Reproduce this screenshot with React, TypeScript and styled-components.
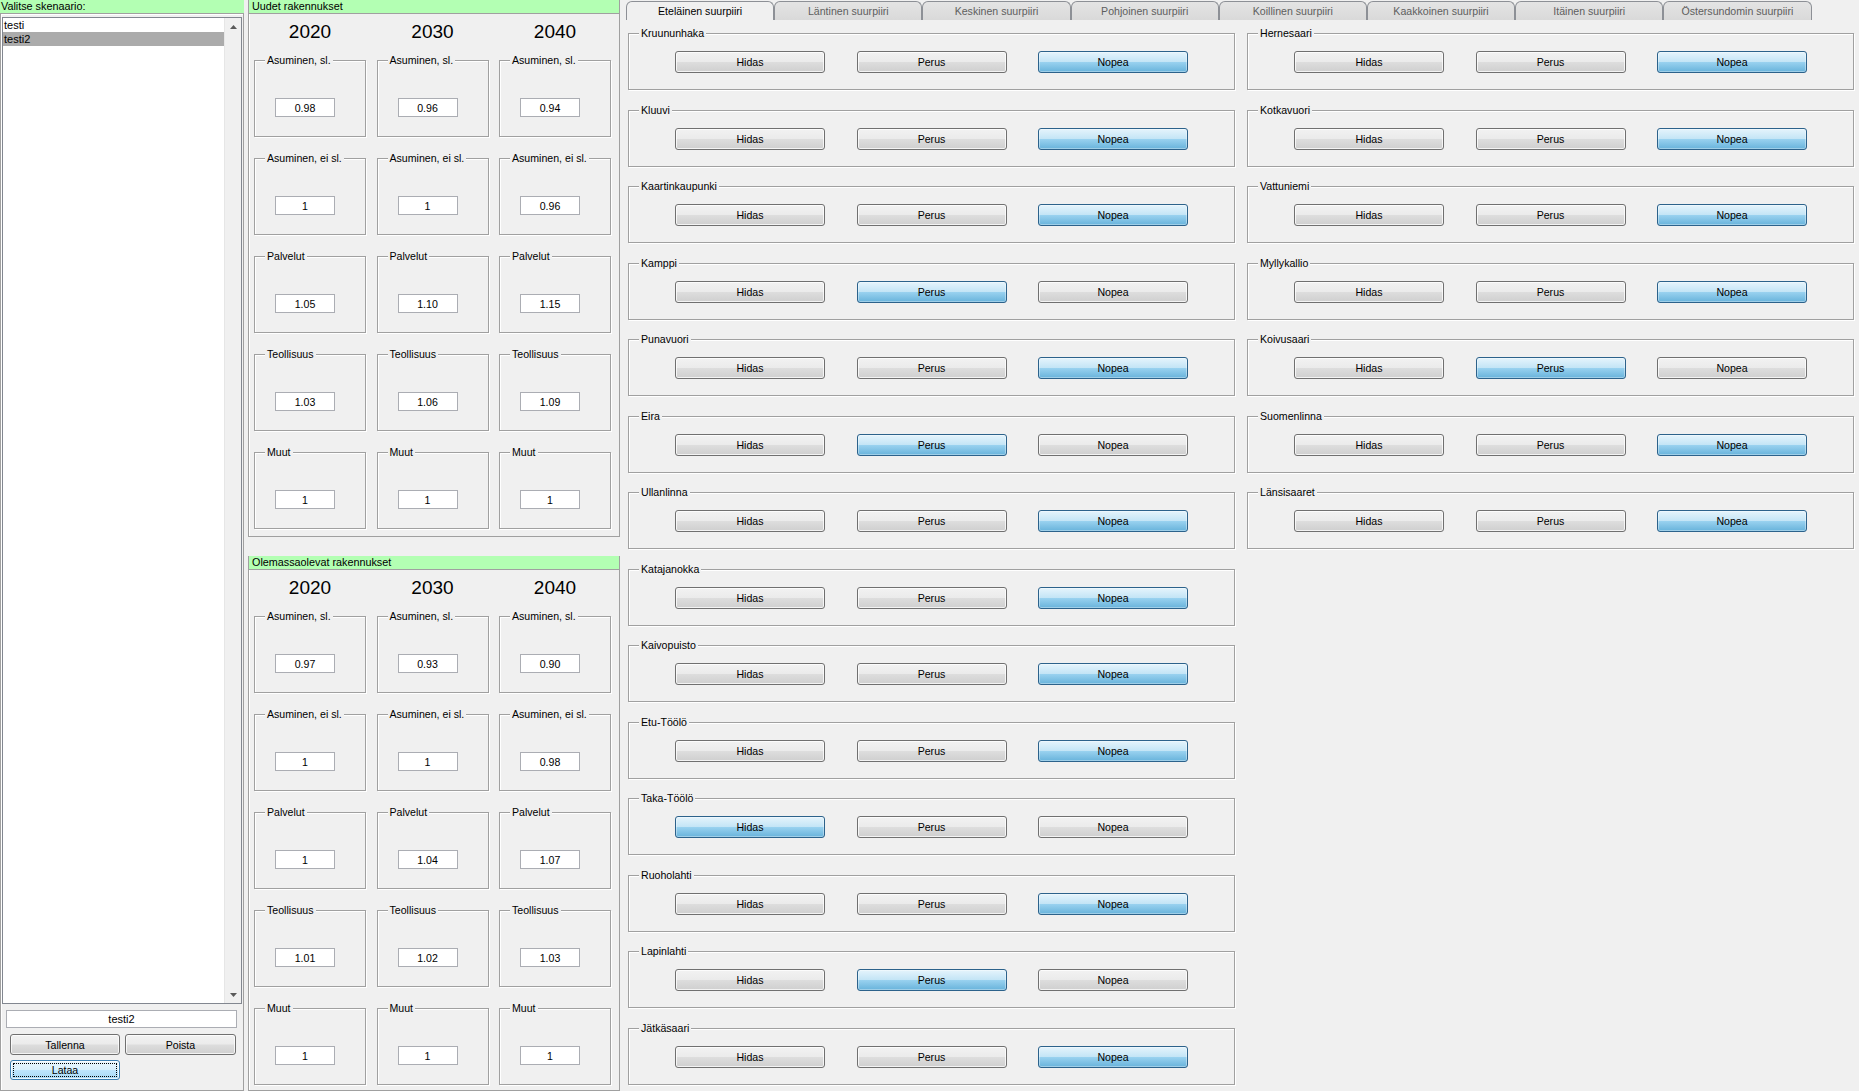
import React from "react";
import styled, { createGlobalStyle, css } from "styled-components";

type Speed = "Hidas" | "Perus" | "Nopea";

const SPEEDS: Speed[] = ["Hidas", "Perus", "Nopea"];

const TABS = [
  "Eteläinen suurpiiri",
  "Läntinen suurpiiri",
  "Keskinen suurpiiri",
  "Pohjoinen suurpiiri",
  "Koillinen suurpiiri",
  "Kaakkoinen suurpiiri",
  "Itäinen suurpiiri",
  "Östersundomin suurpiiri",
];

const LEFT_DISTRICTS: [string, Speed][] = [
  ["Kruununhaka", "Nopea"],
  ["Kluuvi", "Nopea"],
  ["Kaartinkaupunki", "Nopea"],
  ["Kamppi", "Perus"],
  ["Punavuori", "Nopea"],
  ["Eira", "Perus"],
  ["Ullanlinna", "Nopea"],
  ["Katajanokka", "Nopea"],
  ["Kaivopuisto", "Nopea"],
  ["Etu-Töölö", "Nopea"],
  ["Taka-Töölö", "Hidas"],
  ["Ruoholahti", "Nopea"],
  ["Lapinlahti", "Perus"],
  ["Jätkäsaari", "Nopea"],
];

const RIGHT_DISTRICTS: [string, Speed][] = [
  ["Hernesaari", "Nopea"],
  ["Kotkavuori", "Nopea"],
  ["Vattuniemi", "Nopea"],
  ["Myllykallio", "Nopea"],
  ["Koivusaari", "Perus"],
  ["Suomenlinna", "Nopea"],
  ["Länsisaaret", "Nopea"],
];

const YEARS = ["2020", "2030", "2040"];

interface Factor {
  label: string;
  values: string[];
}

const NEW_BUILDINGS: Factor[] = [
  { label: "Asuminen, sl.", values: ["0.98", "0.96", "0.94"] },
  { label: "Asuminen, ei sl.", values: ["1", "1", "0.96"] },
  { label: "Palvelut", values: ["1.05", "1.10", "1.15"] },
  { label: "Teollisuus", values: ["1.03", "1.06", "1.09"] },
  { label: "Muut", values: ["1", "1", "1"] },
];

const OLD_BUILDINGS: Factor[] = [
  { label: "Asuminen, sl.", values: ["0.97", "0.93", "0.90"] },
  { label: "Asuminen, ei sl.", values: ["1", "1", "0.98"] },
  { label: "Palvelut", values: ["1", "1.04", "1.07"] },
  { label: "Teollisuus", values: ["1.01", "1.02", "1.03"] },
  { label: "Muut", values: ["1", "1", "1"] },
];

const ScrollArrow = ({ down }: { down?: boolean }) => (
  <svg width="7" height="4" viewBox="0 0 7 4">
    <path d={down ? "M0 0 L7 0 L3.5 4 Z" : "M0 4 L7 4 L3.5 0 Z"} fill="#5a5a5a" />
  </svg>
);

const ScenarioPanel = () => (
  <LeftPanel>
    <PanelTitle>Valitse skenaario:</PanelTitle>
    <LeftBody>
      <ListBox>
        <ListItems>
          <ListItem>testi</ListItem>
          <ListItem $selected>testi2</ListItem>
        </ListItems>
        <ScrollTrack>
          <ScrollArrow />
          <ScrollArrow down />
        </ScrollTrack>
      </ListBox>
      <NameField readOnly value="testi2" />
      <ButtonRow>
        <WinButton $w={110} $h={21}>Tallenna</WinButton>
        <WinButton $w={111} $h={21}>Poista</WinButton>
      </ButtonRow>
      <ButtonRow>
        <WinButton $w={110} $h={20} $focused>
          Lataa
        </WinButton>
      </ButtonRow>
    </LeftBody>
  </LeftPanel>
);

const BuildingPanel = ({ title, factors, top }: { title: string; factors: Factor[]; top?: boolean }) => (
  <Panel $top={top}>
    <PanelTitle $pad={3}>{title}</PanelTitle>
    <YearRow>
      {YEARS.map((y) => (
        <Year key={y}>{y}</Year>
      ))}
    </YearRow>
    <BoxGrid>
      {factors.map((f) =>
        f.values.map((v, i) => (
          <FactorBox key={f.label + i}>
            <Legend>{f.label}</Legend>
            <ValueInput readOnly value={v} />
          </FactorBox>
        ))
      )}
    </BoxGrid>
  </Panel>
);

const DistrictList = ({ items }: { items: [string, Speed][] }) => (
  <DistrictColumn>
    {items.map(([name, speed]) => (
      <DistrictFrame key={name}>
        <Legend>{name}</Legend>
        {SPEEDS.map((s) => (
          <WinButton key={s} $w={150} $h={22} $active={s === speed}>
            {s}
          </WinButton>
        ))}
      </DistrictFrame>
    ))}
  </DistrictColumn>
);

const App = () => {
  return (
    <>
      <GlobalStyle />
      <Window>
        <ScenarioPanel />
        <Splitter />
        <MiddleColumn>
          <BuildingPanel title="Uudet rakennukset" factors={NEW_BUILDINGS} top />
          <BuildingPanel title="Olemassaolevat rakennukset" factors={OLD_BUILDINGS} />
        </MiddleColumn>
        <RightPane>
          <TabBar>
            {TABS.map((t, i) => (
              <Tab key={t} $selected={i === 0}>
                {t}
              </Tab>
            ))}
          </TabBar>
          <TabContent>
            <DistrictList items={LEFT_DISTRICTS} />
            <DistrictList items={RIGHT_DISTRICTS} />
          </TabContent>
        </RightPane>
      </Window>
    </>
  );
};

export default App;

const GlobalStyle = createGlobalStyle`
  html, body {
    margin: 0;
    padding: 0;
    background: #f0f0f0;
  }
  body {
    font-family: "Liberation Sans", Arial, sans-serif;
    font-size: 10.6px;
    color: #000;
  }
  #root {
    width: 1859px;
    height: 1091px;
    overflow: hidden;
  }
  * {
    box-sizing: border-box;
  }
`;

const etched = css`
  border: 1px solid #a0a0a0;
  box-shadow: inset 1px 1px 0 #fff, 1px 1px 0 #fff;
`;

const Window = styled.div`
  display: flex;
  width: 1859px;
  height: 1091px;
  background: #f0f0f0;
`;

const LeftPanel = styled.div`
  width: 244px;
  flex-shrink: 0;
  display: flex;
  flex-direction: column;
`;

const PanelTitle = styled.div<{ $pad?: number }>`
  height: 13px;
  line-height: 13px;
  padding-left: ${({ $pad }) => $pad ?? 1}px;
  background: #b3ffb3;
  font-size: 10.8px;
  white-space: nowrap;
`;

const LeftBody = styled.div`
  flex: 1;
  display: flex;
  flex-direction: column;
  border: 1px solid #a0a0a0;
  box-shadow: inset 1px 1px 0 #fff;
  padding: 3px 1px 10px 1px;
`;

const ListBox = styled.div`
  flex: 1;
  display: flex;
  background: #fff;
  border: 1px solid #828790;
`;

const ListItems = styled.div`
  flex: 1;
`;

const ListItem = styled.div<{ $selected?: boolean }>`
  height: 14px;
  line-height: 14px;
  padding-left: 1px;
  font-size: 11px;
  background: ${({ $selected }) => ($selected ? "#ababab" : "transparent")};
`;

const ScrollTrack = styled.div`
  width: 17px;
  display: flex;
  flex-direction: column;
  justify-content: space-between;
  align-items: center;
  padding: 7px 0 6px;
  background: #f0f0f0;
  border-left: 1px solid #e6e6e6;
`;

const NameField = styled.input`
  margin: 6px 5px 0 4px;
  height: 18px;
  padding: 0;
  border: 1px solid #abadb3;
  background: #fff;
  text-align: center;
  font-family: inherit;
  font-size: 11px;
  color: #000;
  outline: none;
`;

const ButtonRow = styled.div`
  display: flex;
  gap: 5px;
  padding-left: 8px;
  margin-top: 6px;

  & + & {
    margin-top: 5px;
  }
`;

const WinButton = styled.div<{ $w: number; $h: number; $active?: boolean; $focused?: boolean }>`
  position: relative;
  width: ${({ $w }) => $w}px;
  height: ${({ $h }) => $h}px;
  flex-shrink: 0;
  display: flex;
  align-items: center;
  justify-content: center;
  border-radius: 3px;
  font-size: 10.6px;
  color: #000;
  border: 1px solid #707070;
  background: linear-gradient(#f2f2f2 0%, #ebebeb 48%, #dddddd 52%, #cfcfcf 100%);
  box-shadow: inset 0 0 0 1px rgba(255, 255, 255, 0.75);

  ${({ $active }) =>
    $active &&
    css`
      border-color: #2c628b;
      background: linear-gradient(#e5f4fc 0%, #c4e5f6 48%, #98d1ef 52%, #68b3db 100%);
      box-shadow: inset 0 0 0 1px rgba(255, 255, 255, 0.35);
    `}

  ${({ $focused }) =>
    $focused &&
    css`
      border-color: #3c7fb1;
      background: linear-gradient(#eaf6fd 0%, #d9f0fc 48%, #bee6fd 52%, #a7d9f5 100%);
      &::after {
        content: "";
        position: absolute;
        inset: 2px;
        border: 1px dotted #000;
      }
    `}
`;

const Splitter = styled.div`
  width: 4px;
  flex-shrink: 0;
`;

const MiddleColumn = styled.div`
  width: 372px;
  flex-shrink: 0;
  display: flex;
  flex-direction: column;
`;

const Panel = styled.div<{ $top?: boolean }>`
  display: flex;
  flex-direction: column;
  border: 1px solid #a0a0a0;
  border-top: none;
  box-shadow: inset 1px 0 0 #fff;
  ${({ $top }) => ($top ? "height: 537px; margin-bottom: 19px;" : "flex: 1;")}

  ${PanelTitle} {
    border-bottom: 1px solid #a0a0a0;
    height: 14px;
  }
`;

const columns = css`
  display: grid;
  grid-template-columns: repeat(3, 112px);
  column-gap: 10.5px;
  padding: 0 7px 0 5px;
`;

const YearRow = styled.div`
  ${columns};
  height: 36px;
  align-items: center;
`;

const Year = styled.div`
  text-align: center;
  font-size: 19px;
  line-height: 22px;
`;

const BoxGrid = styled.div`
  ${columns};
  grid-auto-rows: 77px;
  row-gap: 21px;
  padding-top: 10px;
`;

const Legend = styled.span`
  position: absolute;
  top: -7px;
  left: 10px;
  padding: 0 2px;
  line-height: 13px;
  background: #f0f0f0;
  white-space: nowrap;
`;

const FactorBox = styled.div`
  position: relative;
  ${etched};
  padding: 37px 0 0 20px;
`;

const ValueInput = styled.input`
  display: block;
  width: 60px;
  height: 19px;
  padding: 0;
  border: 1px solid #abadb3;
  background: #fff;
  text-align: center;
  font-family: inherit;
  font-size: 10.6px;
  color: #000;
  outline: none;
`;

const RightPane = styled.div`
  flex: 1;
  display: flex;
  flex-direction: column;
`;

const TabBar = styled.div`
  height: 20px;
  display: flex;
  align-items: flex-end;
  padding-left: 6px;
`;

const Tab = styled.div<{ $selected?: boolean }>`
  width: 148.2px;
  height: 19px;
  line-height: 18px;
  text-align: center;
  white-space: nowrap;
  border: 1px solid #8d9096;
  border-bottom: none;
  border-radius: 6px 6px 0 0;
  color: ${({ $selected }) => ($selected ? "#000" : "#5e5e5e")};
  background: ${({ $selected }) => ($selected ? "#f0f0f0" : "linear-gradient(#e4e4e4, #d9d9d9)")};
`;

const TabContent = styled.div`
  display: grid;
  grid-template-columns: 607px 607px;
  column-gap: 12px;
  align-items: start;
  padding: 13px 0 0 8px;
`;

const DistrictColumn = styled.div`
  display: grid;
  grid-auto-rows: 57px;
  row-gap: 19.5px;
`;

const DistrictFrame = styled.div`
  position: relative;
  ${etched};
  display: flex;
  align-items: center;
  justify-content: space-between;
  padding: 1px 46px 0;
`;
